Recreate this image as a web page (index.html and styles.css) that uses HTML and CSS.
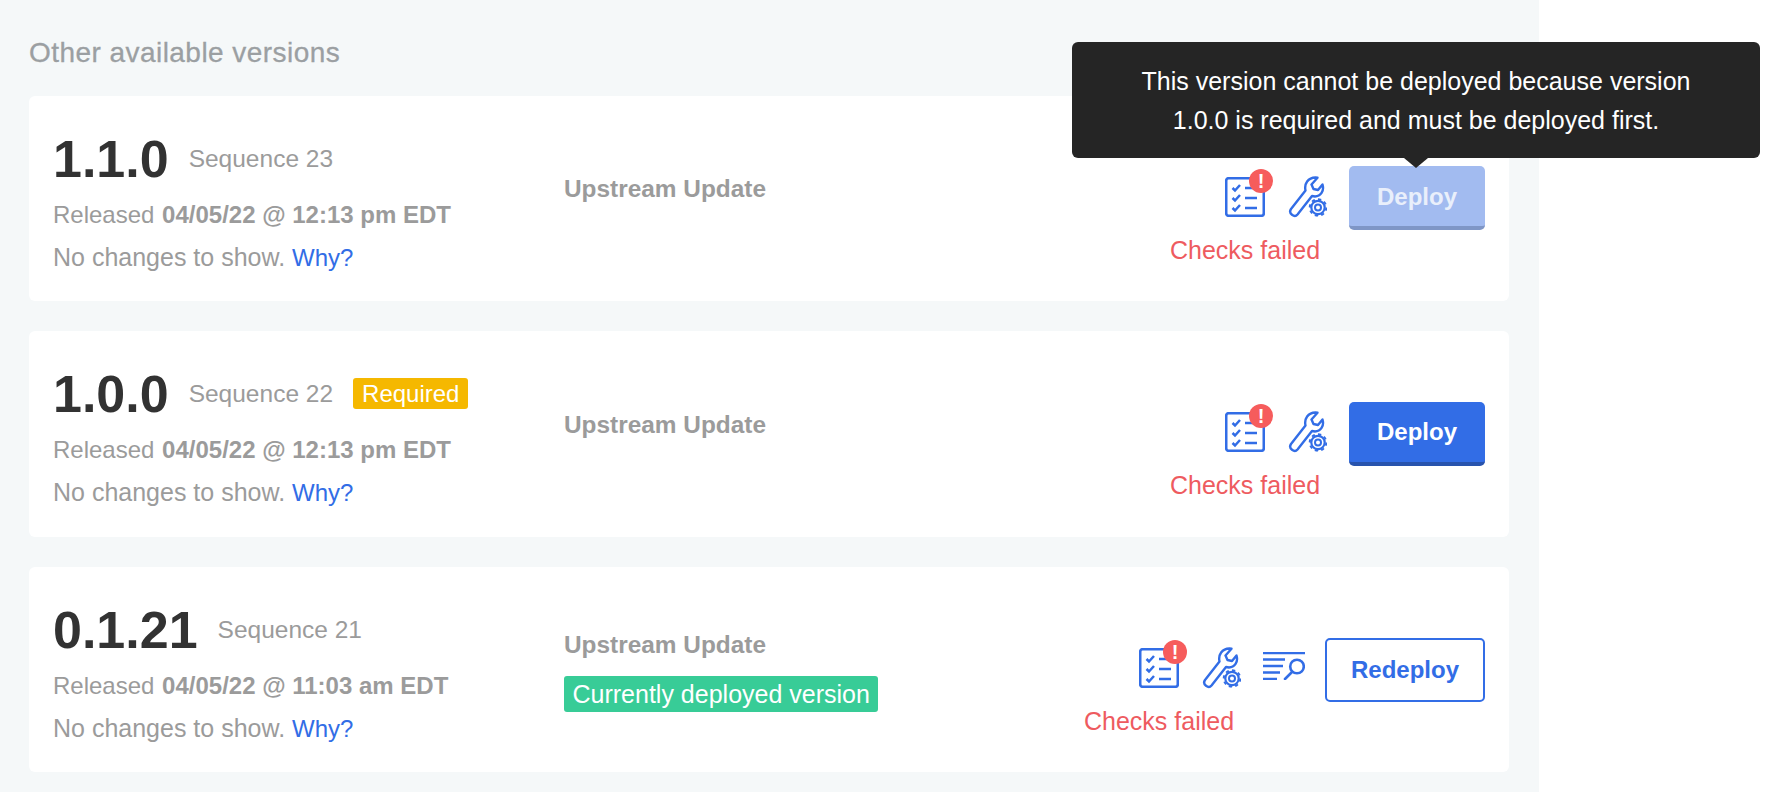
FILE: index.html
```html
<!DOCTYPE html>
<html lang="en">
<head>
  <meta charset="UTF-8" />
  <title>Other available versions</title>
  <link rel="stylesheet" href="styles.css">
</head>
<body>
  <svg class="icon-defs" width="0" height="0">
    <symbol id="icon-checklist" viewBox="0 0 40 40">
      <rect x="1.200" y="1.200" width="37.600" height="37.600" rx="2.500" fill="none" stroke="currentColor" stroke-width="2.600" />
      <path d="M7.500 11l2.500 2.500L15 8M7.500 21l2.500 2.500L15 18M7.500 31l2.500 2.500L15 28" fill="none" stroke="currentColor" stroke-width="2.500" />
      <path d="M20 11h8M20 21h12M20 31h12" fill="none" stroke="currentColor" stroke-width="2.600" />
    </symbol>
    <symbol id="icon-wrench" viewBox="0 0 40 42">
      <path d="M4 33L18.500 14.500C17 8 21 1.500 28.500 1.500L30.500 1.800L24.500 8.500L26.500 13L31 14L35.500 8.500C37.500 15 33.500 20.500 28 20.500L25 20L10.500 38.500C7.500 42 1 37.500 4 33Z" fill="none" stroke="currentColor" stroke-width="2.400" stroke-linejoin="round" />
      <circle cx="31" cy="31.500" r="6.700" fill="#fff" stroke="currentColor" stroke-width="2.200" />
      <circle cx="31" cy="31.500" r="8.300" fill="none" stroke="currentColor" stroke-width="2" pathLength="16" stroke-dasharray="1 1" />
      <circle cx="31" cy="31.500" r="3" fill="none" stroke="currentColor" stroke-width="2" />
    </symbol>
    <symbol id="icon-logs" viewBox="0 0 42 28">
      <path d="M0 1h42M0 7.500h22M0 14h20M0 20.500h17M0 27h14" fill="none" stroke="currentColor" stroke-width="2.600" />
      <circle cx="34" cy="14.500" r="6.800" fill="none" stroke="currentColor" stroke-width="2.600" />
      <path d="M29 20l-7 7" fill="none" stroke="currentColor" stroke-width="2.600" stroke-linecap="round" />
    </symbol>
  </svg>

  <div class="panel">
    <h2 class="panel-title">Other available versions</h2>

    <div class="version-card">
      <div class="version-info">
        <div class="version-head">
          <span class="version-label">1.1.0</span>
          <span class="sequence">Sequence 23</span>
        </div>
        <p class="meta first">Released <b>04/05/22 @ 12:13 pm EDT</b></p>
        <p class="meta note">No changes to show. <a class="why" href="#">Why?</a></p>
      </div>
      <div class="source">
        <div class="source-name">Upstream Update</div>
      </div>
      <div class="actions">
        <div class="checks">
          <div class="icon-wrap">
            <svg class="icon"><use href="#icon-checklist" /></svg>
            <span class="alert">!</span>
          </div>
          <div class="checks-label">Checks failed</div>
        </div>
        <svg class="icon wrench"><use href="#icon-wrench" /></svg>
        <div class="deploy-wrap">
          <div class="tooltip">This version cannot be deployed because version<br>1.0.0 is required and must be deployed first.</div>
          <button class="btn btn-primary is-disabled">Deploy</button>
        </div>
      </div>
    </div>

    <div class="version-card">
      <div class="version-info">
        <div class="version-head">
          <span class="version-label">1.0.0</span>
          <span class="sequence">Sequence 22</span>
          <span class="required-tag">Required</span>
        </div>
        <p class="meta first">Released <b>04/05/22 @ 12:13 pm EDT</b></p>
        <p class="meta note">No changes to show. <a class="why" href="#">Why?</a></p>
      </div>
      <div class="source">
        <div class="source-name">Upstream Update</div>
      </div>
      <div class="actions">
        <div class="checks">
          <div class="icon-wrap">
            <svg class="icon"><use href="#icon-checklist" /></svg>
            <span class="alert">!</span>
          </div>
          <div class="checks-label">Checks failed</div>
        </div>
        <svg class="icon wrench"><use href="#icon-wrench" /></svg>
        <button class="btn btn-primary">Deploy</button>
      </div>
    </div>

    <div class="version-card">
      <div class="version-info">
        <div class="version-head">
          <span class="version-label">0.1.21</span>
          <span class="sequence">Sequence 21</span>
        </div>
        <p class="meta first">Released <b>04/05/22 @ 11:03 am EDT</b></p>
        <p class="meta note">No changes to show. <a class="why" href="#">Why?</a></p>
      </div>
      <div class="source source-current">
        <div class="source-name">Upstream Update</div>
        <span class="current-tag">Currently deployed version</span>
      </div>
      <div class="actions">
        <div class="checks">
          <div class="icon-wrap">
            <svg class="icon"><use href="#icon-checklist" /></svg>
            <span class="alert">!</span>
          </div>
          <div class="checks-label">Checks failed</div>
        </div>
        <svg class="icon wrench"><use href="#icon-wrench" /></svg>
        <svg class="icon logs"><use href="#icon-logs" /></svg>
        <button class="btn btn-outline">Redeploy</button>
      </div>
    </div>
  </div>
</body>
</html>
```

FILE: styles.css
```css
body {
  margin: 0;
  height: 792px;
  overflow: hidden;
  background: #fff;
  font-family: "Liberation Sans", Arial, sans-serif;
  color: #9b9b9b;
}

.icon-defs {
  display: block;
}

.panel {
  width: 1539px;
  height: 792px;
  padding: 36px 30px 0 29px;
  box-sizing: border-box;
  background: #f5f8f9;
}

.panel-title {
  margin: 0 0 26.6px;
  font-size: 28px;
  line-height: 33px;
  font-weight: 400;
  letter-spacing: 0.45px;
  color: #9b9fa2;
  -webkit-text-stroke: 0.3px #9b9fa2;
}

.version-card {
  display: grid;
  grid-template-columns: 511px 1fr auto;
  height: 205.6px;
  margin-bottom: 30px;
  padding: 33px 24px 0;
  box-sizing: border-box;
  background: #fff;
  border-radius: 6px;
}

.version-head {
  display: flex;
  align-items: center;
  gap: 20px;
  height: 60px;
}

.version-label {
  font-size: 52px;
  line-height: 60px;
  font-weight: 700;
  color: #323232;
}

.sequence {
  font-size: 24.5px;
  line-height: 36px;
}

.required-tag {
  margin-bottom: 2px;
  padding: 0 9px;
  font-size: 24px;
  line-height: 31px;
  color: #fff;
  background: #f5b800;
  border-radius: 3px;
}

.meta {
  margin: 6px 0 0;
  font-size: 24px;
  line-height: 36px;
}

.meta.first {
  margin-top: 8px;
}

.meta b {
  margin-left: 1px;
}

.note {
  font-size: 25px;
}

.why {
  font-size: 24px;
  color: #326de6;
  text-decoration: none;
}

.source {
  margin-top: 42.4px;
}

.source-current {
  margin-top: 27px;
}

.source-name {
  font-size: 24.4px;
  line-height: 36px;
  font-weight: 700;
}

.current-tag {
  display: inline-block;
  margin-top: 13px;
  padding: 0 8.5px;
  font-size: 25px;
  line-height: 36px;
  color: #fff;
  background: #38cc97;
  border-radius: 3px;
}

.actions {
  display: flex;
  align-items: flex-start;
  gap: 22px;
  margin-top: 37.8px;
}

.checks {
  display: flex;
  flex-direction: column;
  align-items: center;
  width: 40px;
}

.icon-wrap {
  position: relative;
  width: 40px;
  height: 40px;
  margin-top: 10.4px;
}

.icon {
  display: block;
  width: 40px;
  height: 40px;
  color: #326de6;
}

.wrench {
  height: 42px;
  margin-top: 9.4px;
}

.logs {
  width: 42px;
  height: 28px;
  margin: 14px -2px 0 0;
}

.alert {
  position: absolute;
  top: -8px;
  right: -8px;
  width: 24px;
  height: 24px;
  font-size: 20px;
  line-height: 24px;
  font-weight: 700;
  text-align: center;
  color: #fff;
  background: #f65c5c;
  border-radius: 50%;
}

.checks-label {
  margin-top: 15px;
  font-size: 25px;
  line-height: 36px;
  white-space: nowrap;
  color: #ee5b5f;
}

.deploy-wrap {
  position: relative;
}

.btn {
  display: block;
  height: 64px;
  box-sizing: border-box;
  font-family: inherit;
  font-size: 24px;
  font-weight: 700;
  border-radius: 5px;
  cursor: pointer;
}

.btn-primary {
  width: 136px;
  padding-top: 2px;
  color: #fff;
  background: #326de6;
  border: none;
  border-bottom: 4px solid #2853ad;
}

.btn-primary.is-disabled {
  color: #e9effb;
  background: #a2bbf0;
  border-bottom-color: #7f96c6;
  cursor: not-allowed;
}

.btn-outline {
  width: 160px;
  color: #326de6;
  background: #fff;
  border: 2px solid #326de6;
}

.tooltip {
  position: absolute;
  left: 67px;
  bottom: 72px;
  width: 688px;
  height: 116px;
  padding-top: 20px;
  box-sizing: border-box;
  transform: translateX(-50%);
  font-size: 25px;
  line-height: 39px;
  text-align: center;
  color: #fff;
  background: #252525;
  border-radius: 6px;
}

.tooltip::after {
  content: "";
  position: absolute;
  left: 50%;
  bottom: -10px;
  margin-left: -12px;
  border-top: 10px solid #252525;
  border-left: 12px solid transparent;
  border-right: 12px solid transparent;
}
```
